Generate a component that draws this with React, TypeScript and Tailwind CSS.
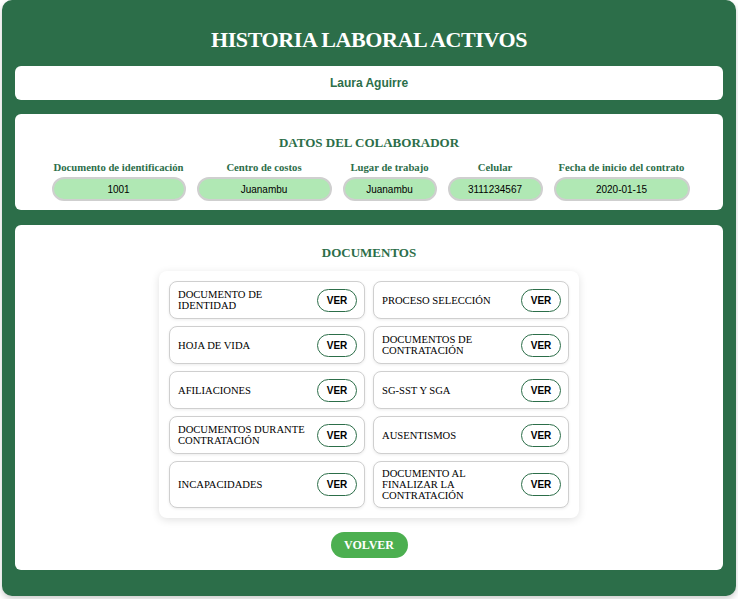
import React from 'react';

const campos = [
    { label: 'Documento de identificación', value: '1001', w: 'w-[134px]' },
    { label: 'Centro de costos', value: 'Juanambu', w: 'w-[135px]' },
    { label: 'Lugar de trabajo', value: 'Juanambu', w: 'w-[94px]' },
    { label: 'Celular', value: '3111234567', w: 'w-[95px]' },
    { label: 'Fecha de inicio del contrato', value: '2020-01-15', w: 'w-[136px]' },
];

const documentos = [
    'DOCUMENTO DE IDENTIDAD',
    'PROCESO SELECCIÓN',
    'HOJA DE VIDA',
    'DOCUMENTOS DE CONTRATACIÓN',
    'AFILIACIONES',
    'SG-SST Y SGA',
    'DOCUMENTOS DURANTE CONTRATACIÓN',
    'AUSENTISMOS',
    'INCAPACIDADES',
    'DOCUMENTO AL FINALIZAR LA CONTRATACIÓN',
];

const serif = "font-['Liberation_Serif','Times_New_Roman',serif]";
const sans = "font-['Liberation_Sans',Arial,sans-serif]";

export default function App() {
    return (
        <div className="min-h-[599px] bg-white">
            <div className="mx-[2px] rounded-[10px] bg-[#2c6e49] px-[13px] pt-[26px] pb-[26px] shadow-[0_3px_6px_rgba(0,0,0,0.2)]">
                <h1 className={`${serif} text-center text-[22px] font-bold leading-[28px] tracking-[-0.4px] text-white`}>
                    HISTORIA LABORAL ACTIVOS
                </h1>

                <div className="mt-[12px] flex h-[34px] items-center justify-center rounded-[6px] bg-white">
                    <span className={`${sans} text-[12px] font-bold text-[#2c6e49]`}>Laura Aguirre</span>
                </div>

                <div className="mt-[14px] rounded-[6px] bg-white pt-[21px] pb-[9px]">
                    <h2 className={`${serif} text-center text-[13px] font-bold leading-[16px] text-[#2c6e49]`}>
                        DATOS DEL COLABORADOR
                    </h2>
                    <div className="mt-[9px] flex justify-center gap-[11px] pl-[3px]">
                        {campos.map((c) => (
                            <div key={c.label} className={`flex flex-col items-stretch ${c.w}`}>
                                <span className={`${serif} whitespace-nowrap text-center text-[10.7px] font-bold leading-[14px] text-[#2c6e49]`}>
                                    {c.label}
                                </span>
                                <div className={`${sans} mt-[3px] flex h-[24px] items-center justify-center rounded-full border-2 border-[#cfcfcf] bg-[#b0e8b4] text-[10px] text-black`}>
                                    {c.value}
                                </div>
                            </div>
                        ))}
                    </div>
                </div>

                <div className="mt-[15px] flex flex-col items-center rounded-[6px] bg-white pt-[20px] pb-[12px]">
                    <h2 className={`${serif} text-center text-[13px] font-bold leading-[16px] text-[#2c6e49]`}>
                        DOCUMENTOS
                    </h2>
                    <div className="mt-[10px] grid w-[420px] grid-cols-2 gap-x-[8px] gap-y-[7px] rounded-[8px] bg-white p-[10px] shadow-[0_2px_8px_rgba(0,0,0,0.12)]">
                        {documentos.map((d, i) => (
                            <div
                                key={d}
                                className={`flex items-center justify-between rounded-[8px] border border-[#cfcfcf] bg-white pl-[8px] pr-[7px] shadow-[0_1px_3px_rgba(0,0,0,0.08)] ${i >= 8 ? 'h-[47px]' : 'h-[38px]'}`}
                            >
                                <span className={`${serif} w-[134px] text-[10.6px] leading-[11px] text-black`}>{d}</span>
                                <button className={`${sans} flex h-[23px] w-[40px] items-center justify-center rounded-full border-[1.5px] border-[#2c6e49] bg-white text-[10px] font-bold text-black`}>
                                    VER
                                </button>
                            </div>
                        ))}
                    </div>
                    <button className={`${serif} mt-[14px] h-[26px] w-[77px] rounded-full bg-[#4caf50] text-[12px] font-bold text-white`}>
                        VOLVER
                    </button>
                </div>
            </div>
        </div>
    );
}
